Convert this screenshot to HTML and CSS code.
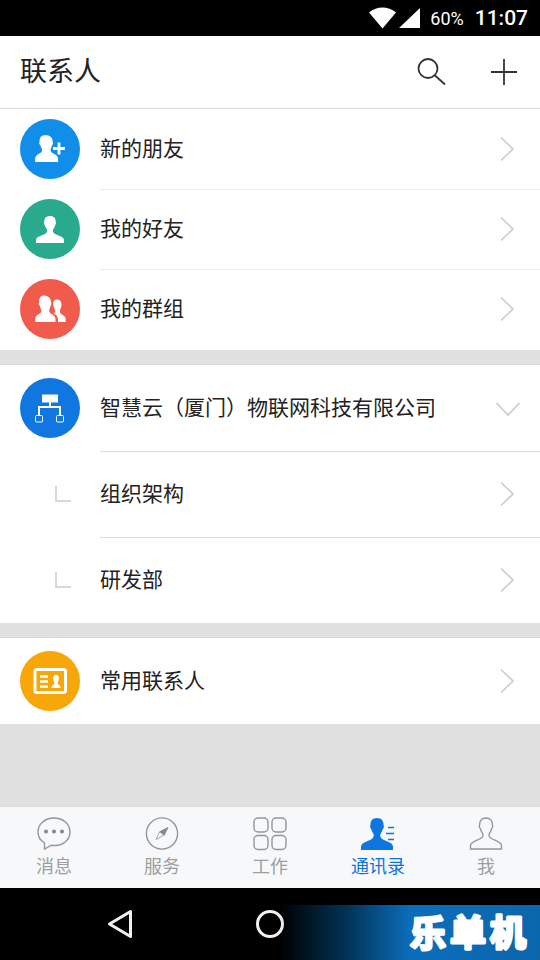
FILE: index.html
```html
<!DOCTYPE html>
<html lang="zh-CN">
<head>
<meta charset="utf-8">
<meta name="viewport" content="width=device-width, initial-scale=1">
<title>联系人</title>
<link rel="stylesheet" href="styles.css">
</head>
<body>
<svg class="defs" aria-hidden="true">
  <symbol id="next" viewBox="0 0 30 30"><path d="M10 3.500l12 11.500-12 11.500" fill="none" stroke="#cdcdcd" stroke-width="1.700"/></symbol>
  <symbol id="person" viewBox="0 0 32 32" overflow="visible"><path d="M16 0C11.500 0 9.200 2.800 9.500 7c-.9.500-.3 3.500.8 4.200.4 2.400 1.700 3.700 2.200 4.700.9 2-.2 4.300-2.500 5.500C6 23.500 0 25 0 28.500V32h32v-3.500c0-3.500-6-5-10-7.100-2.300-1.200-3.400-3.500-2.500-5.500.5-1 1.800-2.300 2.200-4.700 1.100-.7 1.700-3.700.8-4.200C22.800 2.800 20.500 0 16 0z"/></symbol>
</svg>
<div class="status">
  <svg width="52" height="22" viewBox="0 0 52 22" fill="#fff" aria-hidden="true"><path d="M1 5.500C9-1.300 20-1.300 28 5.500L14.500 21.500zM52 1v20H31z"/></svg>
  <span class="battery">60%</span>
  <span class="clock">11:07</span>
</div>
<header class="header">
  <h1>联系人</h1>
  <button class="tool" aria-label="搜索"><svg width="32" height="32" viewBox="0 0 32 32" fill="none" stroke="#333" stroke-width="1.800"><circle cx="13" cy="12.500" r="9.500"/><path d="M20 19.500L30 28.500"/></svg></button>
  <button class="tool" aria-label="添加"><svg width="32" height="32" viewBox="0 0 32 32" fill="none" stroke="#333" stroke-width="1.800"><path d="M3 16h26M16 3v26"/></svg></button>
</header>
<main class="main">
  <nav class="list first">
    <a class="row" href="#new"><span class="avatar blue"><svg width="60" height="60" viewBox="0 0 60 60" fill="#fff"><path d="M25.500 16c-4.500 0-6.300 3-5.900 7-.9.700-.3 2.700.8 3.200.5 2.300 1.700 3.300 1.700 5 0 3.800-7 3.300-7 8.800v3h23v-3c0-5.500-7.500-5-7.500-8.800 0-1.700 1-2.700 1.500-5 1.100-.5 1.500-2.500.6-3.200.4-4-2.700-7-7.200-7z"/><path d="M39 23.500v12M33 29.500h12" stroke="#fff" stroke-width="2.800"/></svg></span><span class="name">新的朋友</span><svg class="arrow"><use href="#next"/></svg></a>
    <a class="row" href="#friends"><span class="avatar green"><svg width="28" height="27" viewBox="0 0 32 32" preserveAspectRatio="none" fill="#fff"><use href="#person"/></svg></span><span class="name">我的好友</span><svg class="arrow"><use href="#next"/></svg></a>
    <a class="row" href="#groups"><span class="avatar red"><svg width="60" height="60" viewBox="0 0 60 60" fill="#fff"><path d="M24 16.500c-3.800 0-5.200 3-4.800 7-.8.700-.3 2.700.6 3.200.4 2.300 1.600 3.300 1.600 5 0 3.800-6.200 3.300-6.200 8.300v3h20.300v-3c0-5-6.300-4.500-6.300-8.300 0-1.700.9-2.700 1.300-5 .9-.5 1.300-2.500.5-3.200.4-4-3-7-7-7z"/><path d="M37 20.500c-2.900 0-4 2.300-3.700 5-.6.500-.1 2.200.6 2.600.4 1.800 1.300 2.500 1.200 4.300-.1 1.300-1.200 1.500-1.600 2.100 2.700 1.300 4.500 3 4.500 6V43h7.700v-3c0-4-5.800-4.500-5.800-7.500 0-1.500.7-2.500 1.100-4.400.7-.4.900-2.100.3-2.600.3-2.700-1.300-5-4.300-5z"/></svg></span><span class="name">我的群组</span><svg class="arrow"><use href="#next"/></svg></a>
  </nav>
  <nav class="list tall">
    <a class="row" href="#company"><span class="avatar deep"><svg width="60" height="60" viewBox="0 0 60 60" fill="none" stroke="#fff"><path fill="#fff" stroke="none" d="M22 16.500h16v8H22z"/><path stroke-width="2" d="M30 24v5M19 37v-8h21v8"/><rect x="15.500" y="37.500" width="7" height="6.500" rx="1"/><rect x="36.500" y="37.500" width="7" height="6.500" rx="1"/></svg></span><span class="name">智慧云（厦门）物联网科技有限公司</span><svg class="arrow down"><use href="#next"/></svg></a>
    <a class="row" href="#structure"><span class="branch"></span><span class="name">组织架构</span><svg class="arrow"><use href="#next"/></svg></a>
    <a class="row" href="#research"><span class="branch"></span><span class="name">研发部</span><svg class="arrow"><use href="#next"/></svg></a>
  </nav>
  <nav class="list tall">
    <a class="row" href="#frequent"><span class="avatar orange"><svg width="60" height="60" viewBox="0 0 60 60" fill="none" stroke="#fff" stroke-width="3"><rect x="15" y="18.500" width="30.500" height="23" rx="2"/><path stroke-width="2.500" d="M20 25.500h8M20 30.500h8M20 35.500h8"/><path fill="#fff" stroke="none" d="M36 24c-3 0-3.300 2.500-2.700 5 .3 1.500 1.200 2 1 3.500-.3 1.500-3 1.500-3 4.500h9.400c0-3-2.700-3-3-4.500-.2-1.500.7-2 1-3.500.6-2.500.3-5-2.700-5z"/></svg></span><span class="name">常用联系人</span><svg class="arrow"><use href="#next"/></svg></a>
  </nav>
</main>
<nav class="tabs">
  <a href="#messages"><svg width="34" height="34" viewBox="0 0 34 34" fill="none" stroke="#929698" stroke-width="1.400"><path d="M7.500 26C3.500 23.500 1 19.500 1 15 1 7 8 1 17 1s16 6 16 14-7 13.500-15 13.500c-1.500 0-2.500-.1-3.500-.3L7.500 32z"/><g fill="#85898b" stroke="none"><circle cx="9" cy="14.500" r="2"/><circle cx="17" cy="14.500" r="2"/><circle cx="25" cy="14.500" r="2"/></g></svg><span>消息</span></a>
  <a href="#services"><svg width="34" height="34" viewBox="0 0 34 34" fill="none" stroke="#929698" stroke-width="1.400"><circle cx="17" cy="16.500" r="15.600"/><path d="M23 10.500L14.500 15 11 22.500l8-4.500z" stroke-width=".8"/><path fill="#85898b" stroke="none" d="M23.500 10l-9.300 4.800 5.100 3.900z"/></svg><span>服务</span></a>
  <a href="#work"><svg width="34" height="34" viewBox="0 0 34 34" fill="none" stroke="#929698" stroke-width="1.400"><rect x="1" y="1" width="14" height="14" rx="4"/><rect x="19" y="1" width="14" height="14" rx="4"/><rect x="1" y="18.500" width="14" height="14" rx="4"/><rect x="19" y="18.500" width="14" height="14" rx="4"/></svg><span>工作</span></a>
  <a class="active" href="#contacts" aria-current="page"><svg width="34" height="34" viewBox="0 0 34 34" fill="#0f75e0"><use href="#person" y="1" width="32" height="32"/><path d="M27 10.500h6M25 16.500h8M27 22.500h6" stroke="#0f75e0" stroke-width="1.400"/></svg><span>通讯录</span></a>
  <a href="#me"><svg width="34" height="34" viewBox="0 0 34 34" fill="none" stroke="#929698" stroke-width="1.400"><use href="#person" x="1" y="1" width="32" height="31"/></svg><span>我</span></a>
</nav>
<footer class="system">
  <button aria-label="返回"><svg width="32" height="32" viewBox="0 0 32 32" fill="none" stroke="#f0f0f0" stroke-width="3" stroke-linejoin="round"><path d="M5.500 16L26.500 3.500v25z"/></svg></button>
  <button aria-label="主屏幕"><svg width="32" height="32" viewBox="0 0 32 32" fill="none" stroke="#f0f0f0" stroke-width="3"><circle cx="16" cy="16" r="12.500"/></svg></button>
  <div class="brand">
    <svg width="124" height="55" viewBox="0 0 124 55"><text x="3" y="42">乐</text><text x="43" y="41">单</text><text x="83" y="41">机</text></svg>
  </div>
</footer>
</body>
</html>
```
FILE: styles.css
```css
* { box-sizing: border-box; }
body {
  margin: 0;
  min-height: 100vh;
  display: flex;
  flex-direction: column;
  background: #e1e1e1;
  color: #222;
  font-family: "Noto Sans CJK SC", sans-serif;
}
a { color: inherit; text-decoration: none; }
button { padding: 0; border: 0; background: none; }
svg { display: block; flex: none; }
.defs { position: absolute; width: 0; height: 0; }

.status {
  height: 36px;
  padding: 0 12px;
  display: flex;
  align-items: center;
  justify-content: flex-end;
  background: #000;
  color: #fff;
  font-family: Roboto, sans-serif;
}
.battery { margin-left: 10px; font-size: 18px; }
.clock { margin-left: 11px; font-size: 21px; font-weight: 500; }

.header {
  height: 73px;
  padding: 0 20px;
  display: flex;
  align-items: center;
  gap: 41px;
  background: #fff;
  border-bottom: 1px solid #dcdcdc;
}
.header h1 { flex: 1; margin: 0; font-size: 27px; line-height: 40px; font-weight: 400; padding-bottom: 4px; }

.main { flex: 1; }
.list { background: #fff; margin-bottom: 14px; }
.first { padding-bottom: 1px; }
.tall { border-top: 1px solid #d6d6d6; }
.row {
  height: 80px;
  padding-left: 20px;
  display: flex;
  align-items: center;
  gap: 20px;
}
.tall .row { height: 86px; }
.name {
  flex: 1;
  align-self: stretch;
  display: flex;
  align-items: center;
  padding-bottom: 4px;
  font-size: 21px;
}
.row + .row {
  background: linear-gradient(#ececec, #ececec) 100px 0 / 100% 1px no-repeat;
}
.tall .row + .row { background-image: linear-gradient(#dcdcdc, #dcdcdc); }
.avatar {
  width: 60px;
  height: 60px;
  border-radius: 50%;
  display: flex;
  align-items: center;
  justify-content: center;
}
.blue { background: #118eea; }
.green { background: #2aaa8c; }
.red { background: #f05b4c; }
.deep { background: #1177e0; }
.orange { background: #f7a707; }
.branch {
  width: 16px;
  height: 16px;
  margin: 0 9px 0 35px;
  border: solid #d8d8d8;
  border-width: 0 0 2px 2px;
}
.arrow { width: 30px; height: 30px; margin-right: 19px; }
.down { margin-right: 17px; transform: rotate(90deg); }

.tabs {
  height: 82px;
  padding-top: 10px;
  display: flex;
  background: #f7f8f9;
  border-top: 1px solid #dcdddd;
}
.tabs a {
  flex: 1;
  display: flex;
  flex-direction: column;
  align-items: center;
  color: #9a9fa3;
  font-size: 18px;
  line-height: 28px;
}
.tabs .active { color: #1171dd; }

.system {
  height: 72px;
  display: grid;
  grid-template-columns: 1fr 60px 1fr;
  align-items: center;
  justify-items: center;
  background: #000;
}
.brand {
  justify-self: stretch;
  align-self: end;
  height: 55px;
  margin-left: -20px;
  padding-right: 9px;
  display: flex;
  align-items: center;
  justify-content: flex-end;
  background: linear-gradient(90deg, transparent, #023154 25%, #0b6dbb 50%, #0b67ac);
}
.brand text {
  fill: #fff;
  stroke: #fff;
  stroke-width: 3px;
  stroke-linejoin: round;
  font-size: 36px;
  font-weight: 700;
}
```
